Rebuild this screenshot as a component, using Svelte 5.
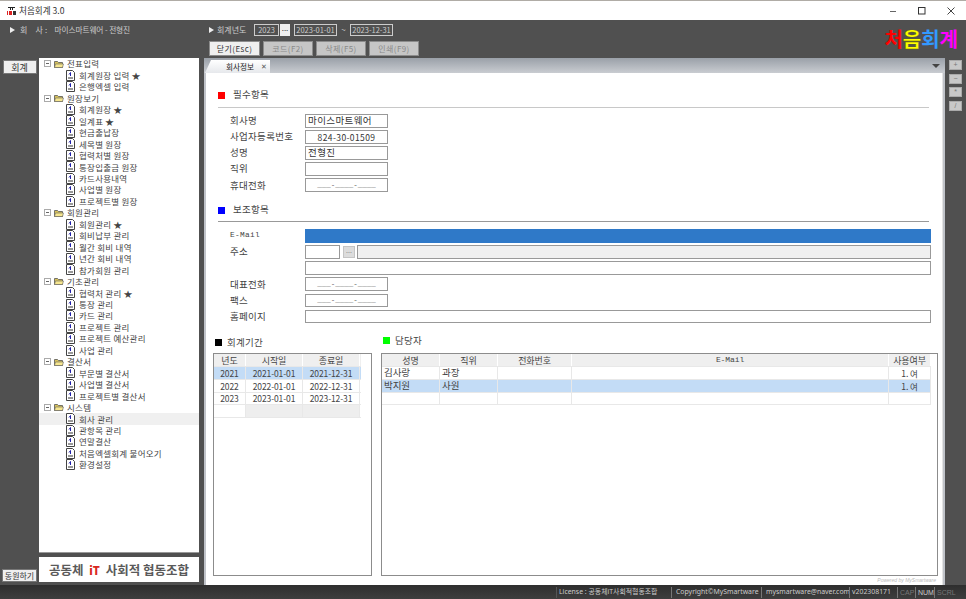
<script>
  const tree = [
    { name: "전표입력", items: ["회계원장 입력 ★", "은행엑셀 입력"] },
    { name: "원장보기", items: ["회계원장 ★", "일계표 ★", "현금출납장", "세목별 원장", "협력처별 원장", "통장입출금 원장", "카드사용내역", "사업별 원장", "프로젝트별 원장"] },
    { name: "회원관리", items: ["회원관리 ★", "회비납부 관리", "월간 회비 내역", "년간 회비 내역", "참가회원 관리"] },
    { name: "기초관리", items: ["협력처 관리 ★", "통장 관리", "카드 관리", "프로젝트 관리", "프로젝트 예산관리", "사업 관리"] },
    { name: "결산서", items: ["부문별 결산서", "사업별 결산서", "프로젝트별 결산서"] },
    { name: "시스템", items: ["회사 관리", "관항목 관리", "연말결산", "처음엑셀회계 불어오기", "환경설정"] }
  ];
  const periods = [
    ["2021", "2021-01-01", "2021-12-31"],
    ["2022", "2022-01-01", "2022-12-31"],
    ["2023", "2023-01-01", "2023-12-31"]
  ];
  const staff = [
    ["김사랑", "과장", "", "", "1. 여"],
    ["박지원", "사원", "", "", "1. 여"]
  ];
  const phone = "___-____-____";
</script>

<div class="win">
  <div class="titlebar">
    <svg class="appicon" width="9" height="8" viewBox="0 0 9 8">
      <rect x="1" y="0" width="7" height="1" fill="#222" />
      <rect x="3" y="1" width="1" height="2" fill="#222" />
      <rect x="5" y="1" width="1" height="2" fill="#222" />
      <rect x="0" y="4" width="1" height="4" fill="#d22" />
      <rect x="2" y="4" width="3" height="4" fill="#d22" />
      <rect x="6" y="4" width="3" height="4" fill="#333" />
    </svg>
    <span class="apptitle">처음회계 3.0</span>
    <div class="winbtns">
      <svg width="8" height="8" viewBox="0 0 8 8"><path d="M1 4.5h6" stroke="#666" fill="none" /></svg>
      <svg width="8" height="8" viewBox="0 0 8 8"><rect x=".5" y=".5" width="6.5" height="6.5" stroke="#333" fill="none" /></svg>
      <svg width="8" height="8" viewBox="0 0 8 8"><path d="M.5.5l7 7M7.5.5l-7 7" stroke="#444" fill="none" /></svg>
    </div>
  </div>

  <div class="head">
    <div class="head-left"><span class="arrow"></span><span class="hl-a">회&nbsp;&nbsp;&nbsp;&nbsp;사 :</span><span class="hl-b">마이스마트웨어 - 전형진</span></div>
    <div class="head-mid">
      <div class="year-row">
        <span class="arrow"></span><span class="year-label">회계년도</span>
        <span class="hbox y">2023</span>
        <span class="dots">...</span>
        <span class="hbox d">2023-01-01</span>
        <span class="tilde">~</span>
        <span class="hbox d">2023-12-31</span>
      </div>
      <div class="btn-row">
        <button class="hbtn on">닫기(Esc)</button>
        <button class="hbtn">코드(F2)</button>
        <button class="hbtn">삭제(F5)</button>
        <button class="hbtn">인쇄(F9)</button>
      </div>
    </div>
    <div class="logo"><span class="c1">처</span><span class="c2">음</span><span class="c3">회</span><span class="c4">계</span></div>
  </div>

  <div class="main">
    <div class="rail">
      <button class="railbtn">회계</button>
      <button class="railbtn low">동원하기</button>
    </div>

    <div class="side">
      <div class="tree">
        {#each tree as g}
          <div class="node grp">
            <span class="minus"></span>
            <svg class="folder" width="10" height="8" viewBox="0 0 10 8">
              <path d="M.5 1.5h3l1 1h4v5h-8z" fill="#d8c25a" stroke="#555" stroke-width=".8" />
              <path d="M1.5 4h8l-1 3.5h-8z" fill="#f6e68e" stroke="#666" stroke-width=".6" />
            </svg>
            <span>{g.name}</span>
          </div>
          {#each g.items as item}
            <div class="node leaf" class:sel={item === "회사 관리"}>
              <svg class="doc" width="9" height="11" viewBox="0 0 9 11">
                <path d="M.5.5h6l2 2v8h-8z" fill="#fff" stroke="#444" />
                <path d="M4.5 2.5v3.5M3 4.5l1.5-2" stroke="#22a" fill="none" />
                <path d="M2 8h5" stroke="#333" fill="none" />
              </svg>
              <span>{item}</span>
            </div>
          {/each}
        {/each}
      </div>
      <div class="brand">공동체 <b>iT</b> 사회적 협동조합</div>
    </div>

    <div class="work">
      <div class="tabs">
        <div class="tab">회사정보<span class="tabx">✕</span></div>
        <span class="caret"></span>
      </div>
      <div class="panel">
        <div class="sec first"><i style="background:#f00"></i>필수항목</div>
        <div class="fields">
          <label>회사명</label><span class="inp w82">마이스마트웨어</span>
          <label>사업자등록번호</label><span class="inp w82 ctr">824-30-01509</span>
          <label>성명</label><span class="inp w82">전형진</span>
          <label>직위</label><span class="inp w82"></span>
          <label>휴대전화</label><span class="inp w82 ctr mask">{phone}</span>
        </div>

        <div class="sec second"><i style="background:#00f"></i>보조항목</div>
        <div class="fields">
          <label class="mono">E-Mail</label><span class="inp full focus"></span>
          <label>주소</label>
          <div class="addr">
            <span class="inp zip"></span><span class="zipbtn">...</span><span class="inp grow off"></span>
          </div>
          <label></label><span class="inp full"></span>
          <label>대표전화</label><span class="inp w82 ctr mask">{phone}</span>
          <label>팩스</label><span class="inp w82 ctr mask">{phone}</span>
          <label>홈페이지</label><span class="inp full"></span>
        </div>

        <div class="tables">
          <div class="tcol left">
            <div class="tlabel"><i style="background:#000"></i>회계기간</div>
            <div class="tbox">
              <div class="row h p"><span>년도</span><span>시작일</span><span>종료일</span></div>
              {#each periods as r, i}
                <div class="row p" class:hi={i === 0}>
                  {#each r as c}<span>{c}</span>{/each}
                </div>
              {/each}
              <div class="row p blank"><span></span><span></span><span></span></div>
            </div>
          </div>
          <div class="tcol right">
            <div class="tlabel up"><i style="background:#0f0"></i>담당자</div>
            <div class="tbox">
              <div class="row h s"><span>성명</span><span>직위</span><span>전화번호</span><span class="mono">E-Mail</span><span>사용여부</span></div>
              {#each staff as r, i}
                <div class="row s" class:hi={i === 1}>
                  <span class="l">{r[0]}</span><span class="l">{r[1]}</span><span></span><span></span><span>{r[4]}</span>
                </div>
              {/each}
              <div class="row s"><span></span><span></span><span></span><span></span><span></span></div>
            </div>
            <div class="powered">Powered by MySmartware</div>
          </div>
        </div>
      </div>
    </div>

    <div class="tools">
      <span class="tool">+</span>
      <span class="tool">−</span>
      <span class="tool">*</span>
      <span class="tool">/</span>
    </div>
  </div>

  <div class="status">
    <span class="st lic">License : 공동체iT사회적협동조합</span>
    <span class="st cp">Copyright©MySmartware</span>
    <span class="st ml">mysmartware@naver.com</span>
    <span class="st ver">v202308171</span>
    <span class="st k cap dim">CAP</span>
    <span class="st k num">NUM</span>
    <span class="st k scrl dim">SCRL</span>
  </div>
</div>

<style>
  :global(body) {
    margin: 0;
    background: #505050;
  }
  .win {
    width: 966px;
    height: 599px;
    display: flex;
    flex-direction: column;
    overflow: hidden;
    background: #505050;
    font-family: "Noto Sans CJK KR", "Noto Sans", sans-serif;
    font-size: 9.5px;
    color: #444;
    line-height: 1;
  }
  .mono {
    font-family: "Liberation Mono", monospace;
  }
  button {
    font-family: inherit;
    padding: 0;
    margin: 0;
  }
  .titlebar {
    height: 19px;
    flex: none;
    background: #fff;
    border-top: 1px solid #b0aca6;
    display: flex;
    align-items: center;
    padding-left: 7px;
  }
  .appicon {
    margin-right: 3px;
  }
  .apptitle {
    font-size: 8.6px;
    color: #333;
  }
  .winbtns {
    margin-left: auto;
    display: flex;
    gap: 21px;
    padding-right: 11px;
    align-items: center;
  }
  .head {
    height: 37px;
    flex: none;
    display: flex;
    color: #ccc;
    padding-top: 1px;
    box-sizing: border-box;
  }
  .head-left {
    width: 209px;
    box-sizing: border-box;
    padding: 2px 0 0 10px;
    display: flex;
    gap: 5px;
    height: 16px;
    align-items: center;
    font-size: 8px;
  }
  .hl-a {
    margin-right: 2px;
    letter-spacing: .2px;
  }
  .hl-b {
    font-size: 7.7px;
    letter-spacing: -.1px;
  }
  .arrow {
    width: 0;
    height: 0;
    border-left: 5px solid #eee;
    border-top: 3.5px solid transparent;
    border-bottom: 3.5px solid transparent;
  }
  .head-mid {
    display: flex;
    flex-direction: column;
  }
  .year-row {
    display: flex;
    align-items: center;
    height: 13px;
    margin-top: 2px;
    font-size: 8px;
  }
  .year-label {
    margin-left: 3px;
    width: 37px;
  }
  .hbox {
    border: 1px solid #ccc;
    height: 12px;
    box-sizing: border-box;
    display: flex;
    align-items: center;
    justify-content: center;
    color: #ccc;
    font-size: 7.5px;
  }
  .hbox.y {
    width: 25px;
  }
  .hbox.d {
    width: 43px;
  }
  .dots {
    width: 10px;
    height: 12px;
    margin: 0 4px 0 1px;
    background: #eee;
    color: #333;
    text-align: center;
    font-size: 8px;
  }
  .tilde {
    width: 13px;
    text-align: center;
  }
  .btn-row {
    display: flex;
    gap: 3px;
    margin-top: 5px;
  }
  .hbtn {
    width: 50px;
    height: 15px;
    background: #c6c6c6;
    border: 1px solid #8c8c8c;
    color: #8a8a8a;
    font-size: 8px;
    letter-spacing: .4px;
  }
  .hbtn.on {
    width: 51px;
    background: #efefef;
    color: #333;
  }
  .logo {
    margin-left: auto;
    margin-right: 8px;
    margin-top: 8px;
    font-size: 20px;
    font-weight: 700;
    line-height: 20px;
  }
  .c1 { color: #f00; }
  .c2 { color: #ff0; -webkit-text-stroke: .3px #6b6b00; }
  .c3 { color: #3399ff; }
  .c4 { color: #f0f; }

  .main {
    flex: 1;
    min-height: 0;
    display: flex;
    padding-top: 1px;
  }
  .rail {
    width: 39px;
    flex: none;
    display: flex;
    flex-direction: column;
    align-items: center;
    padding: 2px 0 2px;
    box-sizing: border-box;
    justify-content: space-between;
  }
  .railbtn {
    width: 34px;
    height: 14px;
    background: #efefef;
    border: 1px solid #777;
    font-size: 9px;
    color: #333;
  }
  .railbtn.low {
    width: 35px;
    height: 13px;
    margin-bottom: 1px;
    font-size: 8px;
    white-space: nowrap;
  }
  .side {
    width: 160px;
    flex: none;
    display: flex;
    flex-direction: column;
    gap: 4px;
    padding-bottom: 3px;
    box-sizing: border-box;
  }
  .tree {
    flex: 1;
    background: #fff;
    border-bottom: 1px solid #999;
    box-sizing: border-box;
  }
  .node {
    height: 11.457px;
    display: flex;
    align-items: center;
    font-size: 8.5px;
    letter-spacing: .25px;
    white-space: nowrap;
    color: #444;
  }
  .grp {
    padding-left: 5px;
  }
  .minus {
    width: 7px;
    height: 7px;
    border: 1px solid #aaa;
    box-sizing: border-box;
    position: relative;
    margin-right: 3px;
  }
  .minus::after {
    content: "";
    position: absolute;
    left: 1px;
    right: 1px;
    top: 2px;
    height: 1px;
    background: #666;
  }
  .folder {
    margin-right: 3px;
  }
  .leaf {
    padding-left: 27px;
    gap: 4px;
  }
  .leaf.sel {
    background: #f0f0f0;
  }
  .brand {
    height: 25px;
    flex: none;
    background: #fff;
    display: flex;
    align-items: center;
    justify-content: center;
    gap: 3px;
    font-size: 12.5px;
    font-weight: 700;
    color: #5a5a5a;
    white-space: pre;
    padding-top: 1px;
    box-sizing: border-box;
  }
  .brand b {
    color: #d9281e;
    font-size: 11px;
  }
  .work {
    width: 741px;
    flex: none;
    margin-left: 5px;
    display: flex;
    flex-direction: column;
    background: #c0c3c9;
  }
  .tabs {
    height: 15px;
    flex: none;
    display: flex;
    align-items: flex-end;
    background: linear-gradient(#9aa0a8, #c9ccd1);
    position: relative;
  }
  .tab {
    margin-left: 1px;
    width: 65px;
    height: 13px;
    background: linear-gradient(#fff, #e6e8ec);
    clip-path: polygon(6px 0, 100% 0, 100% 100%, 0 100%);
    padding-left: 21px;
    box-sizing: border-box;
    display: flex;
    align-items: center;
    font-size: 7.6px;
    color: #222;
    white-space: nowrap;
  }
  .tabx {
    margin-left: 7px;
    font-size: 7px;
    color: #555;
  }
  .caret {
    position: absolute;
    right: 5px;
    top: 6px;
    width: 0;
    height: 0;
    border-top: 4px solid #444;
    border-left: 4px solid transparent;
    border-right: 4px solid transparent;
  }
  .panel {
    flex: 1;
    min-height: 0;
    margin: 0 2px;
    background: #fff;
    border-right: 1px solid #e4e4e4;
    padding: 0 13px 0 12px;
    display: flex;
    flex-direction: column;
    box-sizing: border-box;
  }
  .sec {
    height: 12px;
    flex: none;
    display: flex;
    align-items: center;
    font-size: 9.5px;
    letter-spacing: .3px;
    border-bottom: 1px solid #c8c8c8;
    padding-bottom: 6px;
    color: #444;
  }
  .sec i {
    width: 7px;
    height: 7px;
    margin-right: 8px;
    flex: none;
  }
  .sec.first {
    margin-top: 16px;
  }
  .sec.second {
    margin-top: 12px;
    padding-bottom: 5px;
    margin-bottom: 1px;
    border-bottom-color: #999;
  }
  .fields {
    display: grid;
    grid-template-columns: 75px 1fr;
    row-gap: 2.3px;
    padding: 6px 0 0 12px;
    align-items: center;
    justify-items: start;
    flex: none;
  }
  .fields label {
    font-size: 9.5px;
    letter-spacing: .3px;
    color: #444;
  }
  .fields label.mono {
    font-size: 7.8px;
  }
  .inp {
    height: 13.8px;
    border: 1px solid #999;
    box-sizing: border-box;
    background: #fff;
    display: flex;
    align-items: center;
    padding-left: 2px;
    font-size: 9.5px;
    letter-spacing: .4px;
    color: #333;
    white-space: nowrap;
  }
  .w82 {
    width: 83px;
  }
  .ctr {
    justify-content: center;
    padding-left: 0;
    font-size: 8.5px;
  }
  .mask {
    color: #666;
    font-family: "Liberation Mono", monospace;
    font-size: 7.5px;
    letter-spacing: 0;
  }
  .full {
    width: 626px;
  }
  .focus {
    background: #2f79c8;
    border-color: #2f79c8;
  }
  .addr {
    display: flex;
    align-items: center;
    width: 626px;
  }
  .zip {
    width: 35px;
  }
  .zipbtn {
    width: 12px;
    height: 12px;
    margin: 0 2px 0 3px;
    background: #dcdcdc;
    border: 1px solid #c4c4c4;
    box-sizing: border-box;
    color: #888;
    font-size: 7px;
    text-align: center;
  }
  .grow {
    flex: 1;
  }
  .off {
    background: #f0f0f0;
  }
  .tables {
    flex: 1;
    min-height: 0;
    display: flex;
    margin-left: -5px;
    padding-top: 9px;
    padding-bottom: 9px;
    gap: 9px;
  }
  .tcol {
    display: flex;
    flex-direction: column;
    position: relative;
    flex: none;
  }
  .tcol.left {
    width: 159px;
  }
  .tcol.right {
    width: 557px;
  }
  .tlabel {
    height: 21px;
    display: flex;
    align-items: center;
    font-size: 9.5px;
    letter-spacing: .3px;
    padding-left: 2px;
    flex: none;
  }
  .tlabel.up {
    margin-top: -2px;
    height: 20px;
    padding-bottom: 3px;
  }
  .tlabel i {
    width: 7px;
    height: 7px;
    margin-right: 5px;
  }
  .tbox {
    flex: 1;
    border: 1px solid #8c8c8c;
    box-sizing: border-box;
    background: #fff;
  }
  .row {
    display: grid;
    height: 12.6px;
    border-bottom: 1px solid #e8e8e8;
    box-sizing: border-box;
  }
  .row.p {
    grid-template-columns: 32px 57px 57px;
    width: 147px;
  }
  .row.s {
    grid-template-columns: 58px 58px 74px 317px 42px;
    width: 549px;
  }
  .row span {
    display: flex;
    align-items: center;
    justify-content: center;
    border-right: 1px solid #e8e8e8;
    font-size: 8.5px;
    letter-spacing: -.1px;
    color: #444;
    white-space: nowrap;
  }
  .row span.l {
    justify-content: flex-start;
    padding-left: 2px;
    font-size: 9.5px;
  }
  .row.h {
    background: #efefef;
    height: 13px;
  }
  .row.h span {
    border-right-color: #fff;
    font-size: 9px;
  }
  .row.h span.mono {
    font-size: 8px;
  }
  .hi {
    background: #c3dcf6;
  }
  .blank span:not(:first-child) {
    background: #eee;
  }
  .powered {
    position: absolute;
    right: 2px;
    bottom: -7px;
    font-size: 5px;
    color: #bbb;
    font-style: italic;
    font-family: "Liberation Sans", sans-serif;
  }
  .tools {
    flex: 1;
    display: flex;
    flex-direction: column;
    gap: 3.5px;
    padding: 2px 0 0 4px;
  }
  .tool {
    width: 13px;
    height: 10px;
    background: #c8c8c8;
    border: 1px solid #aaa;
    box-sizing: border-box;
    color: #777;
    font-size: 7px;
    text-align: center;
    font-family: "Liberation Sans", sans-serif;
    line-height: 8px;
  }
  .status {
    height: 14px;
    flex: none;
    background: linear-gradient(#2e2e2e, #3e3e3e);
    display: flex;
    align-items: center;
    padding-left: 556px;
    color: #ccc;
    font-family: "Noto Sans", "Noto Sans CJK KR", sans-serif;
    font-size: 6.9px;
    white-space: nowrap;
  }
  .st {
    border-left: 1px solid #777;
    height: 11px;
    box-sizing: border-box;
    display: flex;
    align-items: center;
    padding-left: 4px;
  }
  .lic { width: 115px; padding-left: 2px; border-left-color: #555; }
  .cp { width: 90px; }
  .ml { width: 88px; }
  .ver { width: 48px; padding-left: 2px; }
  .k {
    padding-left: 2px;
    font-family: "Liberation Sans", sans-serif;
    font-size: 7px;
  }
  .cap { width: 18px; }
  .num { width: 19px; }
  .scrl { width: 22px; }
  .k.dim {
    color: #777;
  }
</style>
